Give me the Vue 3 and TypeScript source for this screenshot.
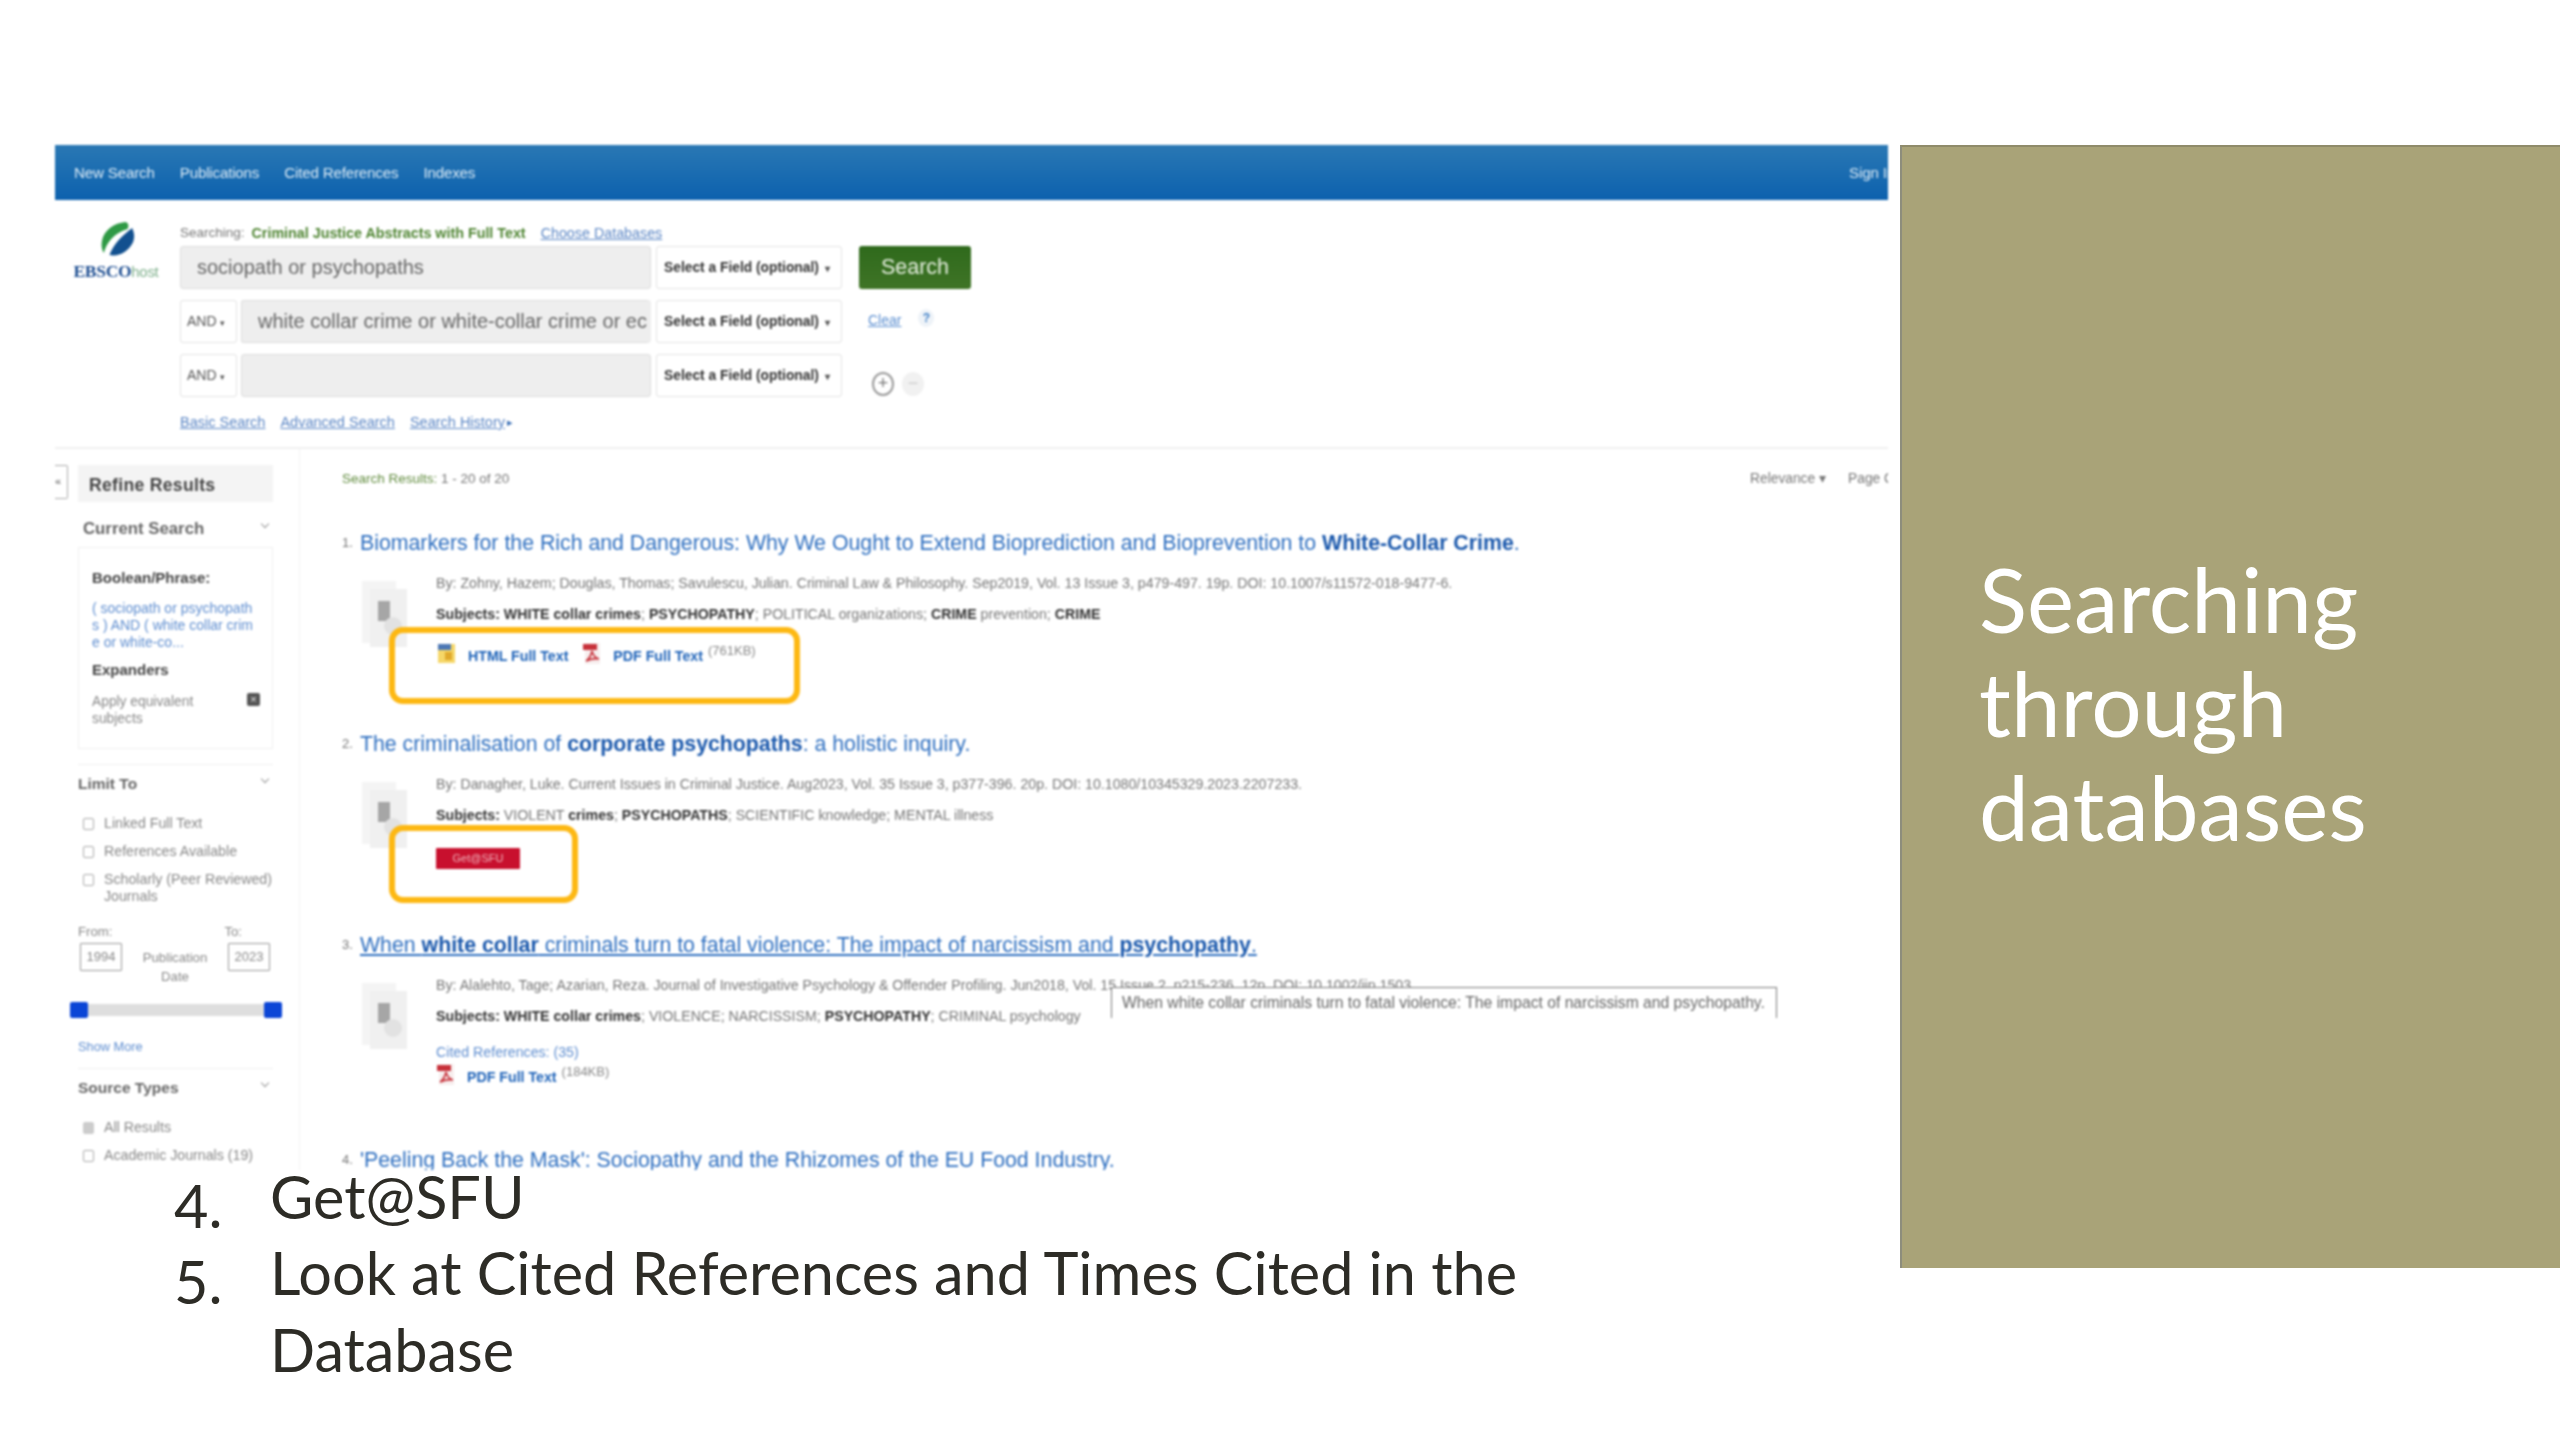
<script setup lang="ts">
const navItems: string[] = ['New Search', 'Publications', 'Cited References', 'Indexes']
const limits: string[] = ['Linked Full Text', 'References Available']
</script>

<template>
  <div class="slide">
    <div class="stage">
      <div class="left">
        <div class="shot">
          <div class="nav">
            <span v-for="n in navItems" :key="n">{{ n }}</span>
            <span class="signin">Sign In</span>
          </div>

          <div class="search">
            <div class="logo">
              <svg width="34" height="34" viewBox="0 0 36 34" preserveAspectRatio="none">
                <path d="M26 0C14 1 3 8 1 19c-1 5 0 9 2 12C6 20 14 11 28 7c2-3 1-6-2-7z" fill="#2f9a45" />
                <path d="M33 6C23 13 13 22 9 33c9 2 20-3 25-13 2-5 1-10-1-14z" fill="#12508f" />
              </svg>
              <div class="wordmark"><b>EBSCO</b><span>host</span></div>
            </div>
            <div class="form">
              <div class="searching">
                <span>Searching:</span>
                <b>Criminal Justice Abstracts with Full Text</b>
                <a class="choose">Choose Databases</a>
              </div>
              <div class="row">
                <div class="input wide">sociopath or psychopaths</div>
                <div class="select">Select a Field (optional)<i>▾</i></div>
                <div class="go">Search</div>
              </div>
              <div class="row">
                <div class="and">AND<i>▾</i></div>
                <div class="input indent">white collar crime or white-collar crime or economic crime</div>
                <div class="select">Select a Field (optional)<i>▾</i></div>
                <a class="clear">Clear</a>
                <span class="help">?</span>
              </div>
              <div class="row">
                <div class="and">AND<i>▾</i></div>
                <div class="input"></div>
                <div class="select">Select a Field (optional)<i>▾</i></div>
                <div class="plusminus">
                  <span class="round dark">+</span>
                  <span class="round pale">−</span>
                </div>
              </div>
              <div class="links">
                <a>Basic Search</a>
                <a>Advanced Search</a>
                <a>Search History</a><i>▸</i>
              </div>
            </div>
          </div>

          <div class="body">
            <aside class="side">
              <div class="refine-row">
                <div class="tab">«</div>
                <div class="refine">Refine Results</div>
              </div>
              <div class="side-inner">
                <div class="head cur"><span>Current Search</span><i class="chev"></i></div>
                <div class="curbox">
                  <div class="strong">Boolean/Phrase:</div>
                  <div class="query">( sociopath or psychopath<br />s ) AND ( white collar crim<br />e or white-co...</div>
                  <div class="strong exp">Expanders</div>
                  <div class="apply">
                    <span>Apply equivalent<br />subjects</span>
                    <i class="x">×</i>
                  </div>
                </div>
                <div class="rule first"></div>
                <div class="head limit"><span>Limit To</span><i class="chev"></i></div>
                <label v-for="l in limits" :key="l" class="check"><i class="box"></i>{{ l }}</label>
                <label class="check"><i class="box"></i><span>Scholarly (Peer Reviewed)<br />Journals</span></label>
                <div class="date-labels"><span>From:</span><span class="to">To:</span></div>
                <div class="dates">
                  <div class="year">1994</div>
                  <div class="pub">Publication<br />Date</div>
                  <div class="year">2023</div>
                </div>
                <div class="slider"><i></i><i></i></div>
                <a class="more">Show More</a>
                <div class="rule"></div>
                <div class="head limit"><span>Source Types</span><i class="chev"></i></div>
                <label class="check"><i class="box on"></i>All Results</label>
                <label class="check"><i class="box"></i>Academic Journals (19)</label>
              </div>
            </aside>

            <main class="results">
              <div class="bar">
                <div class="count"><span>Search Results:</span> 1 - 20 of 20</div>
                <div class="sort"><span>Relevance ▾</span><span>Page Options</span></div>
              </div>

              <section class="result">
                <h3><span class="num">1.</span><a>Biomarkers for the Rich and Dangerous: Why We Ought to Extend Bioprediction and Bioprevention to <b>White-Collar Crime</b>.</a></h3>
                <div class="entry">
                  <svg class="thumb" viewBox="0 0 49 68">
                    <rect x="2" y="1" width="34" height="62" fill="#f4f4f4" />
                    <rect x="10" y="9" width="37" height="58" fill="#f0f0f0" />
                    <rect x="18" y="21" width="12" height="20" fill="#a6a6a6" />
                    <circle cx="33" cy="46" r="9" fill="#e2e2e2" />
                  </svg>
                  <div class="meta">
                    <p class="by">By: Zohny, Hazem; Douglas, Thomas; Savulescu, Julian. Criminal Law &amp; Philosophy. Sep2019, Vol. 13 Issue 3, p479-497. 19p. DOI: 10.1007/s11572-018-9477-6.</p>
                    <p class="subj"><b>Subjects: WHITE collar crimes</b>; <b>PSYCHOPATHY</b>; POLITICAL organizations; <b>CRIME</b> prevention; <b>CRIME</b></p>
                    <div class="ft">
                      <svg class="fi" viewBox="0 0 21 21"><path d="M2 1h17v19H2z" fill="#f6d768" /><rect x="2" y="1" width="13" height="6" fill="#4d78b5" /><path d="M9 9h7v8H9z" fill="#e0a92c" /></svg>
                      <a class="ftl first">HTML Full Text</a>
                      <svg class="fi" viewBox="0 0 21 21"><path d="M3 0h15v21H3z" fill="#f7eeee" /><rect x="1" y="1" width="14" height="6" fill="#c7313a" /><path d="M10 8c-1 5-3 8-6 10 5-2 9-3 13-2-4-1-6-4-7-8z" fill="none" stroke="#c7313a" stroke-width="1.6" /></svg>
                      <a class="ftl">PDF Full Text</a>
                      <sup class="kb">(761KB)</sup>
                    </div>
                  </div>
                </div>
                <div class="mark m1"></div>
              </section>

              <section class="result">
                <h3><span class="num">2.</span><a>The criminalisation of <b>corporate psychopaths</b>: a holistic inquiry.</a></h3>
                <div class="entry">
                  <svg class="thumb" viewBox="0 0 49 68">
                    <rect x="2" y="1" width="34" height="62" fill="#f4f4f4" />
                    <rect x="10" y="9" width="37" height="58" fill="#f0f0f0" />
                    <rect x="18" y="21" width="12" height="20" fill="#a6a6a6" />
                    <circle cx="33" cy="46" r="9" fill="#e2e2e2" />
                  </svg>
                  <div class="meta">
                    <p class="by">By: Danagher, Luke. Current Issues in Criminal Justice. Aug2023, Vol. 35 Issue 3, p377-396. 20p. DOI: 10.1080/10345329.2023.2207233.</p>
                    <p class="subj"><b>Subjects:</b> VIOLENT <b>crimes</b>; <b>PSYCHOPATHS</b>; SCIENTIFIC knowledge; MENTAL illness</p>
                    <div class="sfu">Get@SFU</div>
                  </div>
                </div>
                <div class="mark m2"></div>
              </section>

              <section class="result tall">
                <h3><span class="num">3.</span><a class="under">When <b>white collar</b> criminals turn to fatal violence: The impact of narcissism and <b>psychopathy</b>.</a></h3>
                <div class="entry">
                  <svg class="thumb" viewBox="0 0 49 68">
                    <rect x="2" y="1" width="34" height="62" fill="#f4f4f4" />
                    <rect x="10" y="9" width="37" height="58" fill="#f0f0f0" />
                    <rect x="18" y="21" width="12" height="20" fill="#a6a6a6" />
                    <circle cx="33" cy="46" r="9" fill="#e2e2e2" />
                  </svg>
                  <div class="meta">
                    <p class="by">By: Alalehto, Tage; Azarian, Reza. Journal of Investigative Psychology &amp; Offender Profiling. Jun2018, Vol. 15 Issue 2, p215-236. 12p. DOI: 10.1002/jip.1503.</p>
                    <p class="subj"><b>Subjects: WHITE collar crimes</b>; VIOLENCE; NARCISSISM; <b>PSYCHOPATHY</b>; CRIMINAL psychology</p>
                    <a class="cited">Cited References: (35)</a>
                    <div class="ft near">
                      <svg class="fi" viewBox="0 0 21 21"><path d="M3 0h15v21H3z" fill="#f7eeee" /><rect x="1" y="1" width="14" height="6" fill="#c7313a" /><path d="M10 8c-1 5-3 8-6 10 5-2 9-3 13-2-4-1-6-4-7-8z" fill="none" stroke="#c7313a" stroke-width="1.6" /></svg>
                      <a class="ftl">PDF Full Text</a>
                      <sup class="kb">(184KB)</sup>
                    </div>
                  </div>
                </div>
                <div class="tip">When white collar criminals turn to fatal violence: The impact of narcissism and psychopathy.</div>
              </section>

              <section class="result">
                <h3><span class="num">4.</span><a>'Peeling Back the Mask': Sociopathy and the Rhizomes of the EU Food Industry.</a></h3>
              </section>
            </main>
          </div>
        </div>

        <ol class="steps">
          <li class="one"><span class="marker">4.</span><span>Get@SFU</span></li>
          <li><span class="marker">5.</span><span>Look at Cited References and Times Cited in the Database</span></li>
        </ol>
      </div>

      <div class="panel">
        <h1>Searching through databases</h1>
      </div>
    </div>
  </div>
</template>

<style>
html, body { margin: 0; background: #fff; }
</style>

<style scoped>
* { box-sizing: border-box; }
a { color: inherit; }
i { font-style: normal; }
p, h1, h3, ol { margin: 0; padding: 0; }

.slide { width: 2560px; height: 1440px; padding-top: 145px; background: #fff; overflow: hidden; font-family: "Liberation Sans", Arial, sans-serif; }
.stage { display: flex; align-items: flex-start; }
.left { width: 1833px; margin-left: 55px; }
.shot { height: 1025px; overflow: hidden; filter: blur(0.8px); background: #fff; }

.nav { height: 55px; display: flex; align-items: center; gap: 25px; padding-left: 19px; background: linear-gradient(#2a78b4, #0c61ae); color: #dcebf6; font-size: 15.2px; letter-spacing: -0.2px; }
.signin { margin-left: auto; margin-right: -7px; }

.search { height: 249px; display: flex; border-bottom: 2px solid #f0f0f0; }
.logo { width: 125px; padding-top: 22px; display: flex; flex-direction: column; align-items: center; }
.wordmark { margin-top: 5px; margin-left: -3px; font: 700 17.5px "Liberation Serif", serif; color: #1f4f92; letter-spacing: -0.3px; }
.wordmark span { font: 400 15px "Liberation Sans", sans-serif; color: #7fb08c; }
.form { flex: 1; padding-top: 25px; }
.searching { height: 16px; line-height: 16px; font-size: 13.5px; color: #777; display: flex; gap: 7px; margin-bottom: 5px; white-space: nowrap; }
.searching b { color: #4e8431; font-size: 14.3px; }
.choose { color: #5b86c5; text-decoration: underline; margin-left: 8px; font-size: 14.3px; }
.row { height: 43px; display: flex; align-items: stretch; gap: 5px; margin-bottom: 11px; }
.input { width: 410px; background: #eeeeee; border: 1px solid #dedede; border-radius: 3px; font-size: 20px; line-height: 40px; color: #666; padding-left: 15px; overflow: hidden; white-space: nowrap; }
.input.wide { width: 471px; padding-left: 16px; }
.input.indent { padding-left: 16px; border-right: 4px solid #eeeeee; }
.select { width: 186px; background: #fff; border: 1px solid #e3e3e3; border-radius: 3px; font-size: 13.8px; font-weight: 700; color: #333; line-height: 41px; padding-left: 7px; white-space: nowrap; }
.select i { font-size: 10px; margin-left: 6px; color: #555; }
.and { width: 57px; margin-right: -1px; background: #fff; border: 1px solid #e3e3e3; border-radius: 3px; font-size: 14px; line-height: 41px; color: #555; padding-left: 6px; }
.and i { font-size: 9px; margin-left: 3px; }
.go { width: 112px; margin-left: 12px; background: linear-gradient(#2f6a1c, #3f7426); border-radius: 3px; color: #e6efe0; font-size: 21.5px; line-height: 43px; text-align: center; }
.clear { margin-left: 21px; color: #5b8ed0; font-size: 14px; line-height: 40px; text-decoration: underline; }
.help { margin-left: 12px; margin-top: 9px; width: 16px; height: 18px; border-radius: 50%; background: #eef3f8; color: #3f7fc6; font-size: 12px; font-weight: 700; line-height: 18px; text-align: center; }
.plusminus { display: flex; gap: 8px; margin-left: 25px; margin-top: 18px; }
.round { width: 22px; height: 24px; border-radius: 50%; text-align: center; line-height: 22px; font-size: 18px; }
.round.dark { border: 2px solid #9a9a9a; color: #777; line-height: 19px; }
.round.pale { background: #f1f1f1; color: #ccc; }
.links { margin-top: 17px; display: flex; gap: 15px; height: 16px; line-height: 16px; font-size: 14.5px; color: #5b86c5; }
.links a { text-decoration: underline; }
.links i { margin-left: -13px; font-size: 11px; color: #3a6fb5; }

.body { display: flex; height: 721px; }
.side { width: 245px; border-right: 1px solid #f2f2f2; flex: none; }
.refine-row { display: flex; margin-top: 16px; }
.tab { width: 13px; height: 34px; border: 1px solid #aaa; border-left: none; border-radius: 0 2px 2px 0; font-size: 11px; line-height: 30px; color: #555; }
.refine { width: 195px; height: 37px; margin-left: 10px; background: #f4f4f4; font-size: 17.6px; letter-spacing: 0.3px; font-weight: 700; color: #444; line-height: 40px; padding-left: 11px; white-space: nowrap; }
.side-inner { margin-left: 23px; width: 195px; font-size: 13.2px; color: #777; }
.head { height: 20px; line-height: 20px; display: flex; justify-content: space-between; font-size: 15.5px; font-weight: 700; color: #666; padding-right: 5px; }
.head.cur { margin-top: 17px; padding-left: 5px; font-size: 16.8px; }
.head.limit { margin-top: 9px; margin-bottom: 21px; }
.chev { width: 6px; height: 6px; border-right: 1.5px solid #999; border-bottom: 1.5px solid #999; transform: rotate(45deg); margin-top: 2px; }
.curbox { margin-top: 8px; height: 202px; border: 1px solid #efefef; padding: 21px 0 0 13px; }
.strong { height: 18px; line-height: 18px; font-size: 15px; font-weight: 700; color: #444; }
.query { margin-top: 13px; font-size: 14px; line-height: 17px; color: #5f8ed0; white-space: nowrap; }
.exp { margin-top: 10px; }
.apply { margin-top: 14px; display: flex; justify-content: space-between; line-height: 17px; padding-right: 12px; color: #888; font-size: 13.8px; }
.x { width: 13px; height: 13px; background: #555; border-radius: 2px; color: #eee; font-size: 11px; line-height: 13px; text-align: center; }
.rule { height: 1px; background: #f0f0f0; margin-top: 13px; }
.rule.first { margin-top: 15px; }
.check { display: flex; gap: 10px; line-height: 17px; margin-bottom: 11px; padding-left: 5px; color: #888; white-space: nowrap; font-size: 14.2px; }
.box { flex: none; width: 11px; height: 12px; margin-top: 3px; border: 1px solid #aaa; border-radius: 2px; background: #fff; }
.box.on { background: #ccc; border-color: #ccc; }
.date-labels { margin-top: 19px; height: 16px; line-height: 16px; display: flex; justify-content: space-between; padding-right: 31px; color: #888; }
.dates { margin-top: 3px; height: 43px; display: flex; padding: 0 3px 0 2px; justify-content: space-between; }
.year { width: 42px; height: 28px; border: 1px solid #999; border-radius: 1px; text-align: center; line-height: 25px; color: #888; font-size: 13px; }
.pub { margin-top: 5px; line-height: 19px; text-align: center; color: #888; }
.slider { width: 212px; height: 16px; margin: 16px 0 0 -8px; display: flex; justify-content: space-between; background: linear-gradient(#fff 2px, #dedede 2px, #dedede 14px, #fff 14px); }
.slider i { width: 18px; height: 16px; background: #0b45d6; border-radius: 2px; }
.more { display: block; margin-top: 21px; height: 16px; line-height: 16px; color: #5f8ed0; font-size: 12.8px; }

.results { flex: 1; padding-left: 42px; }
.bar { display: flex; justify-content: space-between; padding: 22px 0 0; height: 82px; line-height: 16px; font-size: 13.5px; color: #777; }
.count span { color: #5f8a3c; }
.sort { display: flex; gap: 22px; width: 138px; overflow: hidden; white-space: nowrap; font-size: 13.8px; }

.result { position: relative; height: 201px; }
.result.tall { height: 215px; }
h3 { display: flex; height: 24px; line-height: 24px; font-size: 21.3px; font-weight: 400; color: #2e6fc0; white-space: nowrap; }
h3 b { color: #1a58ac; }
.num { width: 18px; font-size: 13px; color: #777; }
.under { text-decoration: underline; }
.entry { display: flex; margin: 20px 0 0 18px; }
.thumb { width: 49px; height: 68px; margin: 5px 27px 0 0; flex: none; }
.meta { font-size: 14.2px; color: #777; white-space: nowrap; }
.by { height: 16px; line-height: 16px; }
.subj { height: 16px; line-height: 16px; margin-top: 15px; }
.subj b { color: #333; }
.ft { display: flex; align-items: flex-start; margin-top: 21px; }
.ft.near { margin-top: 4px; }
.fi { width: 21px; height: 21px; flex: none; margin-right: 10px; }
.ftl { font-size: 14.2px; font-weight: 700; color: #1d62b8; line-height: 16px; margin-top: 5px; margin-right: 14px; }
.ftl.first { margin-left: 1px; }
.kb { font-size: 13px; color: #888; line-height: 16px; margin: 0 0 0 -9px; vertical-align: baseline; }
.mark { position: absolute; left: 47px; border: 6px solid #fdb813; border-radius: 14px; }
.m1 { top: 96px; width: 411px; height: 77px; }
.m2 { top: 93px; width: 189px; height: 78px; }
.sfu { margin-top: 25px; width: 84px; height: 21px; background: #c8102e; color: #f0b5bd; font-size: 11px; line-height: 20px; text-align: center; border-radius: 1px; }
.cited { display: block; margin-top: 20px; height: 16px; line-height: 16px; color: #5f8ed0; }
.tip { position: absolute; left: 769px; top: 54px; width: 666px; height: 31px; background: #fff; border: 1px solid #777; border-bottom: none; padding-left: 10px; font-size: 15.7px; line-height: 29px; color: #666; white-space: nowrap; }

.steps { list-style: none; margin: 0 0 0 119px; width: 1400px; font-family: Lato, "Open Sans", sans-serif; font-size: 59.4px; line-height: 77px; color: #2d2c26; filter: blur(0.5px); }
.steps li { display: flex; }
.steps li.one { height: 64px; line-height: 52px; }
.marker { width: 96px; height: 77px; flex: none; padding-top: 9px; }

.panel { width: 660px; height: 1123px; margin-left: 12px; background: #a9a378; border-left: 2px solid #8d8d7c; border-top: 2px solid #8f8b6a; padding: 400px 0 0 77px; filter: blur(0.4px); }
.panel h1 { font-family: Lato, "Open Sans", sans-serif; font-weight: 400; font-size: 89px; line-height: 104px; color: #fff; width: 460px; }
</style>
